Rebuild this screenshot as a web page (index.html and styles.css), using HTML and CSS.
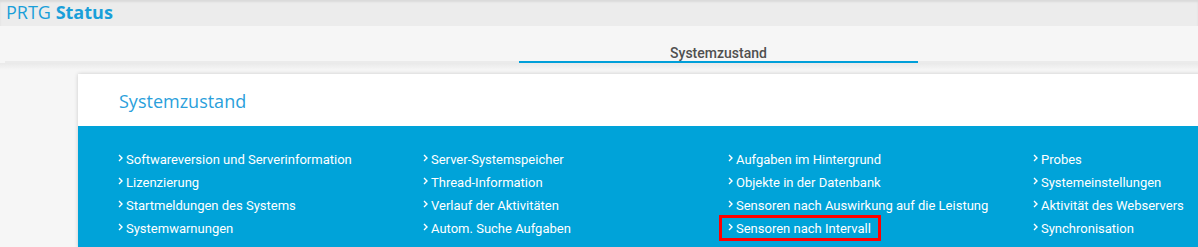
FILE: index.html
```html
<!DOCTYPE html>
<html lang="de">
<head>
<meta charset="utf-8">
<title>PRTG Status</title>
<link rel="stylesheet" href="styles.css">
</head>
<body>
<header class="topbar"><span class="brand">PRTG</span> <strong class="brand-strong">Status</strong></header>
<nav class="tabs">
  <div class="tab">Systemzustand</div>
</nav>
<div class="tabshade"></div>
<section class="card">
  <h1 class="card-title">Systemzustand</h1>
  <div class="links">
    <ul class="col">
      <li class="item"><svg class="chev" viewBox="0 0 5 8"><polyline points="1,1 4,4 1,7"/></svg>Softwareversion und Serverinformation</li>
      <li class="item"><svg class="chev" viewBox="0 0 5 8"><polyline points="1,1 4,4 1,7"/></svg>Lizenzierung</li>
      <li class="item"><svg class="chev" viewBox="0 0 5 8"><polyline points="1,1 4,4 1,7"/></svg>Startmeldungen des Systems</li>
      <li class="item"><svg class="chev" viewBox="0 0 5 8"><polyline points="1,1 4,4 1,7"/></svg>Systemwarnungen</li>
    </ul>
    <ul class="col">
      <li class="item"><svg class="chev" viewBox="0 0 5 8"><polyline points="1,1 4,4 1,7"/></svg>Server-Systemspeicher</li>
      <li class="item"><svg class="chev" viewBox="0 0 5 8"><polyline points="1,1 4,4 1,7"/></svg>Thread-Information</li>
      <li class="item"><svg class="chev" viewBox="0 0 5 8"><polyline points="1,1 4,4 1,7"/></svg>Verlauf der Aktivitäten</li>
      <li class="item"><svg class="chev" viewBox="0 0 5 8"><polyline points="1,1 4,4 1,7"/></svg>Autom. Suche Aufgaben</li>
    </ul>
    <ul class="col">
      <li class="item"><svg class="chev" viewBox="0 0 5 8"><polyline points="1,1 4,4 1,7"/></svg>Aufgaben im Hintergrund</li>
      <li class="item"><svg class="chev" viewBox="0 0 5 8"><polyline points="1,1 4,4 1,7"/></svg>Objekte in der Datenbank</li>
      <li class="item"><svg class="chev" viewBox="0 0 5 8"><polyline points="1,1 4,4 1,7"/></svg>Sensoren nach Auswirkung auf die Leistung</li>
      <li class="item highlight"><svg class="chev" viewBox="0 0 5 8"><polyline points="1,1 4,4 1,7"/></svg>Sensoren nach Intervall</li>
    </ul>
    <ul class="col">
      <li class="item"><svg class="chev" viewBox="0 0 5 8"><polyline points="1,1 4,4 1,7"/></svg>Probes</li>
      <li class="item"><svg class="chev" viewBox="0 0 5 8"><polyline points="1,1 4,4 1,7"/></svg>Systemeinstellungen</li>
      <li class="item"><svg class="chev" viewBox="0 0 5 8"><polyline points="1,1 4,4 1,7"/></svg>Aktivität des Webservers</li>
      <li class="item"><svg class="chev" viewBox="0 0 5 8"><polyline points="1,1 4,4 1,7"/></svg>Synchronisation</li>
    </ul>
  </div>
</section>
</body>
</html>
```
FILE: styles.css
```css
html, body {
  margin: 0;
  padding: 0;
}
body {
  background: #f6f6f6;
  width: 1198px;
  height: 247px;
  overflow: hidden;
  font-family: Roboto, "Liberation Sans", sans-serif;
}
.topbar {
  height: 26px;
  background: #ececec;
  box-shadow: inset 0 2px 2px rgba(0,0,0,0.08);
  padding-left: 6px;
  font-family: "Open Sans", "DejaVu Sans", sans-serif;
  font-size: 18px;
  line-height: 25px;
  color: #1a9fd9;
  white-space: nowrap;
}
.brand { font-weight: 400; }
.brand-strong { font-weight: 700; }
.tabs {
  margin-left: 5px;
  margin-top: 9px;
  border-bottom: 2px solid #ebebeb;
  display: flex;
  padding-left: 514px;
}
.tab {
  width: 399px;
  text-align: center;
  font-size: 14px;
  font-weight: 500;
  color: #505050;
  padding-top: 10px;
  line-height: 16px;
  height: 16px;
  border-bottom: 2px solid #009fd9;
  margin-bottom: -2px;
}
.tabshade {
  height: 7px;
  background: linear-gradient(#e9e9e9, #f6f6f6);
}
.card {
  margin-left: 78px;
  margin-top: 4px;
  width: 1300px;
  background: #fff;
  box-shadow: 0 0 4px rgba(0,0,0,0.18);
}
.card-title {
  margin: 0;
  height: 52px;
  padding-left: 41px;
  font-family: "Open Sans", "DejaVu Sans", sans-serif;
  font-weight: 400;
  font-size: 18px;
  line-height: 54px;
  color: #2a9fdb;
}
.links {
  background: #00a3d9;
  display: grid;
  grid-template-columns: repeat(4, 305px);
  padding: 22px 0 8px 40px;
}
.col {
  list-style: none;
  margin: 0;
  padding: 0;
}
.item {
  position: relative;
  display: flex;
  align-items: flex-start;
  height: 23px;
  line-height: 23px;
  font-size: 13px;
  color: #fff;
  white-space: nowrap;
}
.chev {
  width: 5px;
  height: 8px;
  margin-top: 6px;
  margin-right: 3px;
  flex: none;
  fill: none;
  stroke: #fff;
  stroke-width: 1.4;
}
.highlight::after {
  content: "";
  position: absolute;
  left: -9px;
  top: -2px;
  width: 162px;
  height: 26px;
  box-sizing: border-box;
  border: 3px solid #ff0000;
}
```
